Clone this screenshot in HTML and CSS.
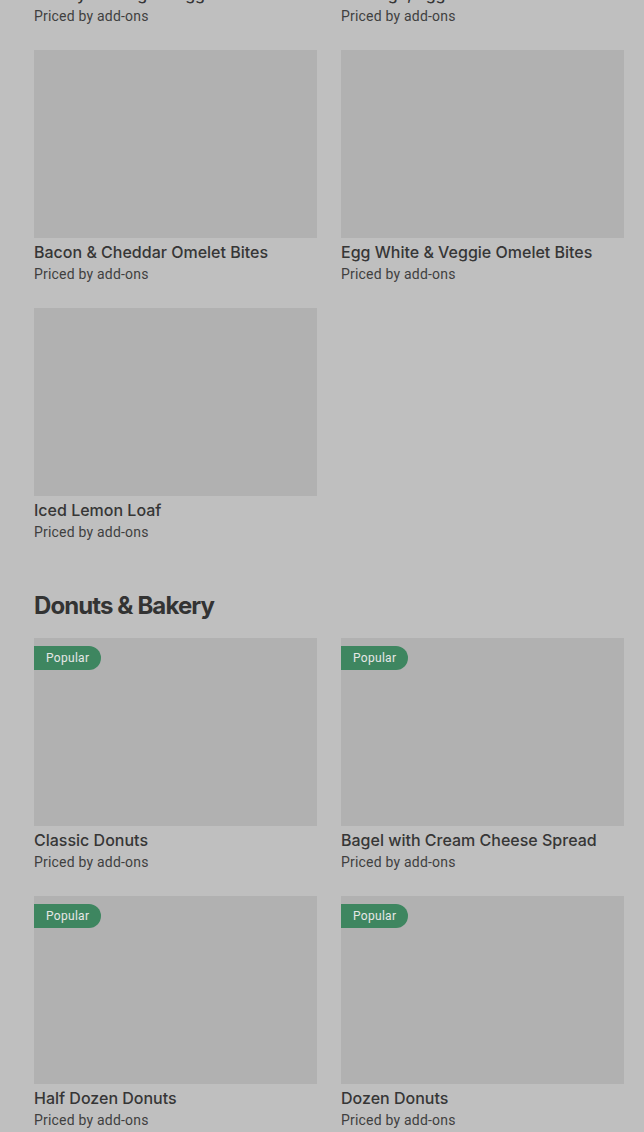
FILE: index.html
```html
<!DOCTYPE html>
<html>
<head>
<meta charset="utf-8">
<link rel="stylesheet" href="styles.css">
</head>
<body>
<div class="page">
  <section class="section first">
    <div class="grid">
      <div class="card"><div class="thumb"></div><div class="title">Turkey Sausage &amp; Egg Sandwich</div><div class="sub">Priced by add-ons</div></div>
      <div class="card"><div class="thumb"></div><div class="title">Sausage, Egg &amp; Cheese Croissant</div><div class="sub">Priced by add-ons</div></div>
      <div class="card"><div class="thumb"></div><div class="title">Bacon &amp; Cheddar Omelet Bites</div><div class="sub">Priced by add-ons</div></div>
      <div class="card"><div class="thumb"></div><div class="title">Egg White &amp; Veggie Omelet Bites</div><div class="sub">Priced by add-ons</div></div>
      <div class="card"><div class="thumb"></div><div class="title">Iced Lemon Loaf</div><div class="sub">Priced by add-ons</div></div>
    </div>
  </section>
  <section class="section">
    <h2 class="heading">Donuts &amp; Bakery</h2>
    <div class="grid">
      <div class="card"><div class="thumb"><span class="badge">Popular</span></div><div class="title">Classic Donuts</div><div class="sub">Priced by add-ons</div></div>
      <div class="card"><div class="thumb"><span class="badge">Popular</span></div><div class="title">Bagel with Cream Cheese Spread</div><div class="sub">Priced by add-ons</div></div>
      <div class="card"><div class="thumb"><span class="badge">Popular</span></div><div class="title">Half Dozen Donuts</div><div class="sub">Priced by add-ons</div></div>
      <div class="card"><div class="thumb"><span class="badge">Popular</span></div><div class="title">Dozen Donuts</div><div class="sub">Priced by add-ons</div></div>
    </div>
  </section>
</div>
</body>
</html>
```
FILE: styles.css
```css
html, body {
  margin: 0;
  padding: 0;
  background: #bfbfbf;
  overflow: hidden;
}
body {
  font-family: Roboto, "Liberation Sans", sans-serif;
  color: #333333;
}
.page {
  padding: 0 20px 0 34px;
}
.section.first {
  margin-top: -208px;
}
.grid {
  display: grid;
  grid-template-columns: 283px 283px;
  column-gap: 24px;
  row-gap: 24px;
}
.card {
  display: flex;
  flex-direction: column;
}
.thumb {
  position: relative;
  height: 188px;
  background: #b1b1b1;
}
.title {
  font-family: Inter, Roboto, sans-serif;
  font-size: 16px;
  font-weight: 500;
  line-height: 24px;
  margin-top: 2px;
  white-space: nowrap;
  color: #363636;
}
.sub {
  font-size: 14px;
  line-height: 20px;
  letter-spacing: 0.2px;
  color: #3f3f3f;
}
.heading {
  margin: 32px 0 0;
  height: 64px;
  padding-bottom: 2px;
  box-sizing: border-box;
  display: flex;
  align-items: center;
  font-family: Inter, Roboto, sans-serif;
  font-size: 24px;
  font-weight: 700;
  letter-spacing: -0.9px;
  color: #333333;
}
.badge {
  position: absolute;
  left: 0;
  top: 8px;
  height: 24px;
  padding: 0 12px;
  display: flex;
  align-items: center;
  background: #3e8660;
  color: #e6e6e6;
  font-size: 12px;
  letter-spacing: 0.3px;
  border-radius: 0 12px 12px 0;
}
```
